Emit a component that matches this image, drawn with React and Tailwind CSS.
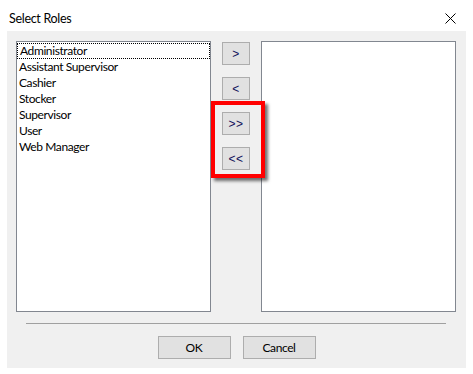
import React from "react";

const roles = ["Administrator", "Assistant Supervisor", "Cashier", "Stocker", "Supervisor", "User", "Web Manager"];

function Btn({ children, className = "" }) {
  return (
    <div className={"flex items-center justify-center border border-[#adadad] bg-[#e1e1e1] leading-none " + className}>
      {children}
    </div>
  );
}

function Arrow({ children }) {
  return (
    <Btn className="h-[23px] font-['Liberation_Sans',sans-serif] text-[12px] tracking-[0.5px] text-[#10105a]">
      {children}
    </Btn>
  );
}

export default function App() {
  return (
    <div className="relative h-[374px] w-[473px] bg-white font-['Lato',sans-serif] text-[12px] tracking-[-0.4px] text-black">
      <div className="flex h-[31px] items-start justify-between pl-[9px] pr-[17px] pt-[12px]">
        <span className="text-[12.5px] leading-[13px] tracking-[-0.3px]">Select Roles</span>
        <svg width="11" height="11" viewBox="0 0 11 11" className="mt-[1px]">
          <path d="M0.5 0.5 L10.5 10.5 M10.5 0.5 L0.5 10.5" stroke="#000" strokeWidth="1" />
        </svg>
      </div>
      <div className="mx-[7px] flex h-[337px] flex-col bg-[#f0f0f0]">
        <div className="flex pl-[9px] pt-[10px]">
          <div className="h-[271px] w-[195px] border border-[#828790] bg-white pt-[1px]">
            {roles.map((r, i) => (
              <div
                key={r}
                className={
                  "h-[16px] pl-[2px] text-[12px] " +
                  (i === 0 ? "border border-dotted border-black pl-[1px] leading-[14px]" : "leading-[16px]")
                }
              >
                {r}
              </div>
            ))}
          </div>
          <div className="relative ml-[11px] flex w-[28px] flex-col gap-[12px] pt-[1px]">
            <Arrow>&gt;</Arrow>
            <Arrow>&lt;</Arrow>
            <Arrow>&gt;&gt;</Arrow>
            <Arrow>&lt;&lt;</Arrow>
            <div className="absolute left-[-11px] top-[60px] h-[77px] w-[54px] border-[4px] border-[#ff0000] shadow-[3px_3px_3px_rgba(0,0,0,0.55)]"></div>
          </div>
          <div className="ml-[11px] h-[271px] w-[195px] border border-[#828790] bg-white"></div>
        </div>
        <div className="ml-[19px] mr-[20px] mt-[11px] h-px bg-[#a0a0a0]"></div>
        <div className="mt-[12px] flex justify-center gap-[12px]">
          <Btn className="h-[23px] w-[73px] text-[12px]">OK</Btn>
          <Btn className="h-[23px] w-[73px] text-[12px]">Cancel</Btn>
        </div>
      </div>
    </div>
  );
}
